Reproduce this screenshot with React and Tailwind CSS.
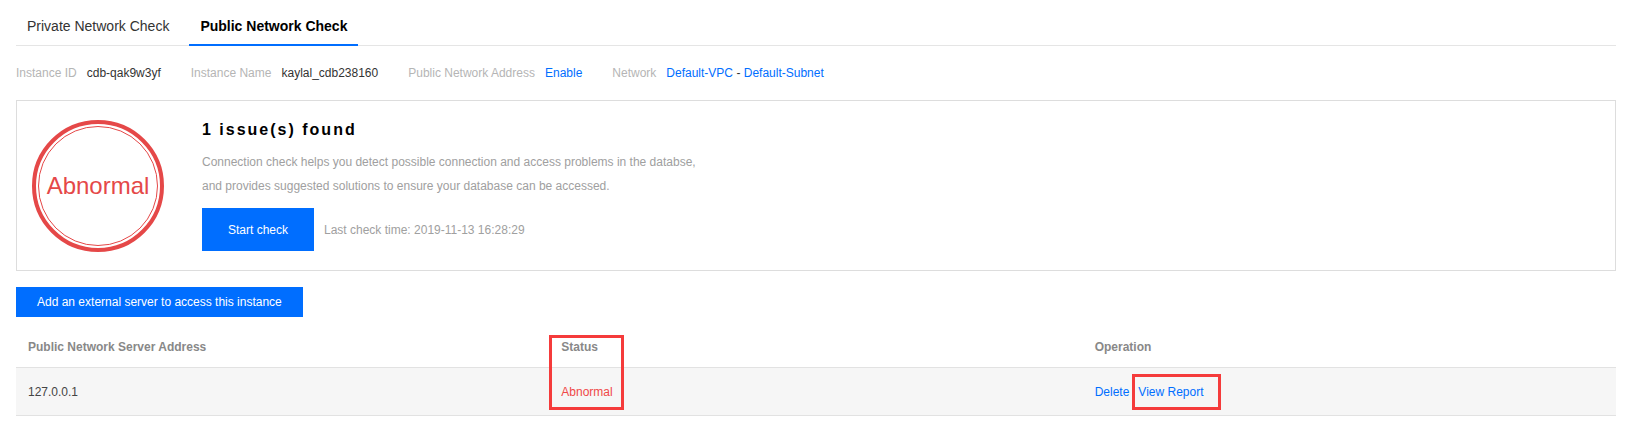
import React, { useState } from "react";

const info = [
	{ label: "Instance ID", value: "cdb-qak9w3yf" },
	{ label: "Instance Name", value: "kaylal_cdb238160" },
	{ label: "Public Network Address", link: "Enable" },
];

export default function App() {
	const [tab, setTab] = useState("public");

	return (
		<div className="min-h-screen bg-white font-['Liberation_Sans',Arial,sans-serif] text-[12px]">
			<div className="ml-4 w-[1600px]">
				{/* TABS */}
				<div className="flex gap-[9px] border-b border-[#e5e5e5]">
					<button
						className={
							tab === "private"
								? "h-[46px] -mb-px px-[11px] pt-[16px] pb-[8px] text-[14px] leading-[20px] font-bold text-black border-b-2 border-[#006eff]"
								: "h-[46px] -mb-px px-[11px] pt-[16px] pb-[8px] text-[14px] leading-[20px] text-[#333] border-b-2 border-transparent"
						}
						onClick={() => setTab("private")}
					>
						Private Network Check
					</button>
					<button
						className={
							tab === "public"
								? "h-[46px] -mb-px px-[11px] pt-[16px] pb-[8px] text-[14px] leading-[20px] font-bold text-black border-b-2 border-[#006eff]"
								: "h-[46px] -mb-px px-[11px] pt-[16px] pb-[8px] text-[14px] leading-[20px] text-[#333] border-b-2 border-transparent"
						}
						onClick={() => setTab("public")}
					>
						Public Network Check
					</button>
				</div>

				{/* INSTANCE INFO */}
				<div className="flex items-center gap-[30px] mt-[17px] leading-[20px]">
					{info.map((item) => (
						<div key={item.label} className="flex gap-[10px]">
							<span className="text-[#b5b5b5]">{item.label}</span>
							{item.link ? (
								<a className="text-[#006eff]">{item.link}</a>
							) : (
								<span className="text-[#333]">{item.value}</span>
							)}
						</div>
					))}
					<div className="flex gap-[10px]">
						<span className="text-[#b5b5b5]">Network</span>
						<span className="text-[#333]">
							<a className="text-[#006eff]">Default-VPC</a> - <a className="text-[#006eff]">Default-Subnet</a>
						</span>
					</div>
				</div>

				{/* CHECK RESULT */}
				<div className="mt-[17px] h-[171px] border border-[#dddddd] flex items-center pl-[15px]">
					<div className="w-[132px] h-[132px] rounded-full border-[4px] border-[#e54848] flex items-center justify-center shrink-0">
						<div className="w-[120px] h-[120px] rounded-full border border-[#e54848] flex items-center justify-center">
							<span className="text-[24px] text-[#e54848] leading-none">Abnormal</span>
						</div>
					</div>
					<div className="ml-[38px]">
						<p className="text-[16px] leading-[20px] font-bold tracking-[2px] text-black">1 issue(s) found</p>
						<p className="mt-[10px] leading-[24px] text-[#a0a0a0]">
							Connection check helps you detect possible connection and access problems in the databse,
							<br />
							and provides suggested solutions to ensure your database can be accessed.
						</p>
						<div className="mt-[10px] flex items-center gap-[10px]">
							<button className="w-[112px] h-[43px] bg-[#006eff] text-white">Start check</button>
							<span className="text-[#a0a0a0]">Last check time: 2019-11-13 16:28:29</span>
						</div>
					</div>
				</div>

				<button className="mt-[16px] h-[30px] px-[21px] bg-[#006eff] text-white">
					Add an external server to access this instance
				</button>

				{/* SERVER TABLE */}
				<div className="mt-[10px]">
					<div className="grid grid-cols-3 h-[41px] items-center border-b border-[#e2e2e2] font-bold text-[#888]">
						<div className="px-3">Public Network Server Address</div>
						<div className="px-3 relative">
							Status
							<div className="absolute left-0 top-[-3px] w-[75px] h-[75px] border-[3px] border-[#f53b3b]"></div>
						</div>
						<div className="px-3">Operation</div>
					</div>
					<div className="grid grid-cols-3 h-[48px] items-center border-b border-[#e2e2e2] bg-[#f6f6f6] text-[#444]">
						<div className="px-3">127.0.0.1</div>
						<div className="px-3 text-[#f04848]">Abnormal</div>
						<div className="px-3 flex gap-[9px]">
							<a className="text-[#006eff]">Delete</a>
							<a className="text-[#006eff] relative">
								View Report
								<span className="absolute left-[-6px] top-[-9px] w-[89px] h-[36px] border-[3px] border-[#f53b3b]"></span>
							</a>
						</div>
					</div>
				</div>
			</div>
		</div>
	);
}
